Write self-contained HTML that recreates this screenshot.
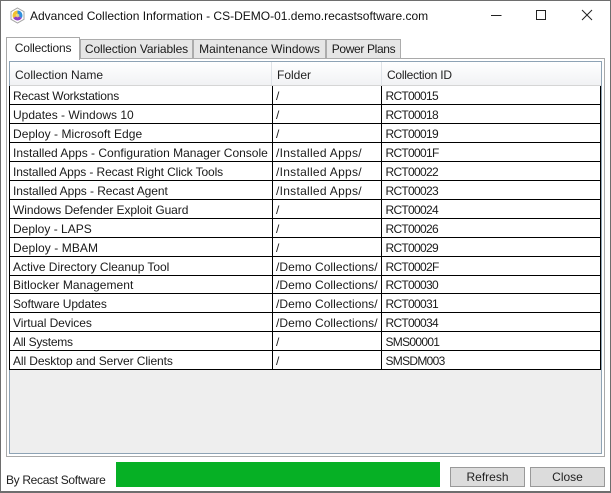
<!DOCTYPE html>
<html><head><meta charset="utf-8"><style>
html,body{margin:0;padding:0;background:#fff}
#w{position:relative;width:611px;height:493px;overflow:hidden;background:#fff;font-family:"Liberation Sans",sans-serif;font-size:12px;color:#1a1a1a}
#w div{position:absolute;box-sizing:border-box}
.t{white-space:nowrap;line-height:16px;height:16px}
.l{height:1px;left:10px;width:591px;background:#000}
.c1{left:13px}.c2{left:276px}.c3{left:385.500px;letter-spacing:-.7px}
.tab{background:#e6e6e6;border:1px solid #acacac;top:39px;height:20px;line-height:18px;text-align:center;white-space:nowrap}
.btn{background:#dcdcdc;border:1px solid #999;top:467px;height:20px;line-height:18px;text-align:center;color:#222}
.h{top:67px;white-space:nowrap;line-height:16px;color:#222}
.i{letter-spacing:.28px}.d{letter-spacing:.05px}
</style></head><body><div id="w">
<div style="left:0;top:0;width:611px;height:493px;border:1px solid #6e6e6e;border-bottom:2px solid #6e6e6e"></div>
<svg style="position:absolute;left:9px;top:7px" width="17" height="17" viewBox="0 0 17 17"><path d="M8.500 1 15 4.700v7.600L8.500 16 2 12.300V4.700z" fill="#fff" stroke="#a5a5a5"/><path d="M8.500 3.500A5 5 0 0 0 4.200 11L8.500 8.500z" fill="#f2c230"/><path d="M8.500 3.500a5 5 0 0 1 4.300 7.500L8.500 8.500z" fill="#2f8fdc"/><path d="M12.800 11a5 5 0 0 1-8.600 0l4.300-2.500z" fill="#9040c4"/><path d="M8.500 6.500l1.800 1v2l-1.800 1-1.800-1v-2z" fill="#f6e27a" opacity=".8"/></svg>
<div class="t" style="left:30px;top:8px;font-size:12px;color:#111">Advanced Collection Information - CS-DEMO-01.demo.recastsoftware.com</div>
<svg style="position:absolute;left:485px;top:8px" width="120" height="16" viewBox="0 0 120 16" fill="none" stroke="#222" stroke-width="1"><path d="M6 7.500H16.500"/><rect x="51.500" y="2.500" width="9" height="9"/><path d="M97 2l10 10M107 2L97 12"/></svg>
<div style="left:6px;top:58px;width:599px;height:399px;border:1px solid #a9a9a9;background:#fff"></div>
<div class="tab" style="left:80px;width:113px;letter-spacing:-.1px">Collection Variables</div>
<div class="tab" style="left:193px;width:133px">Maintenance Windows</div>
<div class="tab" style="left:326px;width:75px;letter-spacing:-.35px">Power Plans</div>
<div style="left:6px;top:37px;width:74px;height:23px;background:#fff;border:1px solid #a9a9a9;border-bottom:none;text-align:center;line-height:20px;color:#222;letter-spacing:-.2px">Collections</div>
<div style="left:9px;top:61px;width:593px;height:393px;border:1px solid #8ea3b5;background:#eeeeee"></div>
<div style="left:10px;top:62px;width:591px;height:24px;background:linear-gradient(#fff,#f1f2f4);border-bottom:1px solid #d5d5d5"></div>
<div style="left:271px;top:62px;width:1px;height:23px;background:#dfe3e8"></div>
<div style="left:381px;top:62px;width:1px;height:23px;background:#dfe3e8"></div>
<div class="h" style="left:15px">Collection Name</div><div class="h" style="left:277px">Folder</div><div class="h" style="left:387px;letter-spacing:-.25px">Collection ID</div>
<div style="left:10px;top:86px;width:591px;height:284px;background:#fff"></div>
<div style="left:9px;top:86px;width:1px;height:284px;background:#000"></div>
<div style="left:272px;top:86px;width:1px;height:284px;background:#000"></div>
<div style="left:381px;top:86px;width:1px;height:284px;background:#000"></div>
<div style="left:600px;top:86px;width:1px;height:284px;background:#000"></div>
<div class="l" style="top:104px"></div><div class="l" style="top:123px"></div><div class="l" style="top:142px"></div><div class="l" style="top:161px"></div><div class="l" style="top:180px"></div><div class="l" style="top:199px"></div><div class="l" style="top:218px"></div><div class="l" style="top:237px"></div><div class="l" style="top:256px"></div><div class="l" style="top:275px"></div><div class="l" style="top:293px"></div><div class="l" style="top:312px"></div><div class="l" style="top:331px"></div><div class="l" style="top:350px"></div><div class="l" style="top:369px"></div>
<div class="t c1" style="top:88px;letter-spacing:-.2px">Recast Workstations</div><div class="t c2" style="top:88px">/</div><div class="t c3" style="top:88px">RCT00015</div>
<div class="t c1" style="top:107px">Updates - Windows 10</div><div class="t c2" style="top:107px">/</div><div class="t c3" style="top:107px">RCT00018</div>
<div class="t c1" style="top:126px;letter-spacing:.05px">Deploy - Microsoft Edge</div><div class="t c2" style="top:126px">/</div><div class="t c3" style="top:126px">RCT00019</div>
<div class="t c1" style="top:145px">Installed Apps - Configuration Manager Console</div><div class="t c2 i" style="top:145px">/Installed Apps/</div><div class="t c3" style="top:145px">RCT0001F</div>
<div class="t c1" style="top:164px;letter-spacing:-.11px">Installed Apps - Recast Right Click Tools</div><div class="t c2 i" style="top:164px">/Installed Apps/</div><div class="t c3" style="top:164px">RCT00022</div>
<div class="t c1" style="top:183px;letter-spacing:-.07px">Installed Apps - Recast Agent</div><div class="t c2 i" style="top:183px">/Installed Apps/</div><div class="t c3" style="top:183px">RCT00023</div>
<div class="t c1" style="top:202px;letter-spacing:-.07px">Windows Defender Exploit Guard</div><div class="t c2" style="top:202px">/</div><div class="t c3" style="top:202px">RCT00024</div>
<div class="t c1" style="top:221px">Deploy - LAPS</div><div class="t c2" style="top:221px">/</div><div class="t c3" style="top:221px">RCT00026</div>
<div class="t c1" style="top:240px;letter-spacing:.08px">Deploy - MBAM</div><div class="t c2" style="top:240px">/</div><div class="t c3" style="top:240px">RCT00029</div>
<div class="t c1" style="top:259px;letter-spacing:-.03px">Active Directory Cleanup Tool</div><div class="t c2 d" style="top:259px">/Demo Collections/</div><div class="t c3" style="top:259px">RCT0002F</div>
<div class="t c1" style="top:277px;letter-spacing:.05px">Bitlocker Management</div><div class="t c2 d" style="top:277px">/Demo Collections/</div><div class="t c3" style="top:277px">RCT00030</div>
<div class="t c1" style="top:296px;letter-spacing:-.1px">Software Updates</div><div class="t c2 d" style="top:296px">/Demo Collections/</div><div class="t c3" style="top:296px">RCT00031</div>
<div class="t c1" style="top:315px;letter-spacing:-.07px">Virtual Devices</div><div class="t c2 d" style="top:315px">/Demo Collections/</div><div class="t c3" style="top:315px">RCT00034</div>
<div class="t c1" style="top:334px;letter-spacing:-.27px">All Systems</div><div class="t c2" style="top:334px">/</div><div class="t c3" style="top:334px">SMS00001</div>
<div class="t c1" style="top:353px;letter-spacing:-.1px">All Desktop and Server Clients</div><div class="t c2" style="top:353px">/</div><div class="t c3" style="top:353px">SMSDM003</div>
<div class="t" style="left:6px;top:472px;color:#222;letter-spacing:-.33px">By Recast Software</div>
<div style="left:116px;top:462px;width:324px;height:25px;background:#06b025"></div>
<div class="btn" style="left:450px;width:75px">Refresh</div>
<div class="btn" style="left:530px;width:75px">Close</div>
</div></body></html>
